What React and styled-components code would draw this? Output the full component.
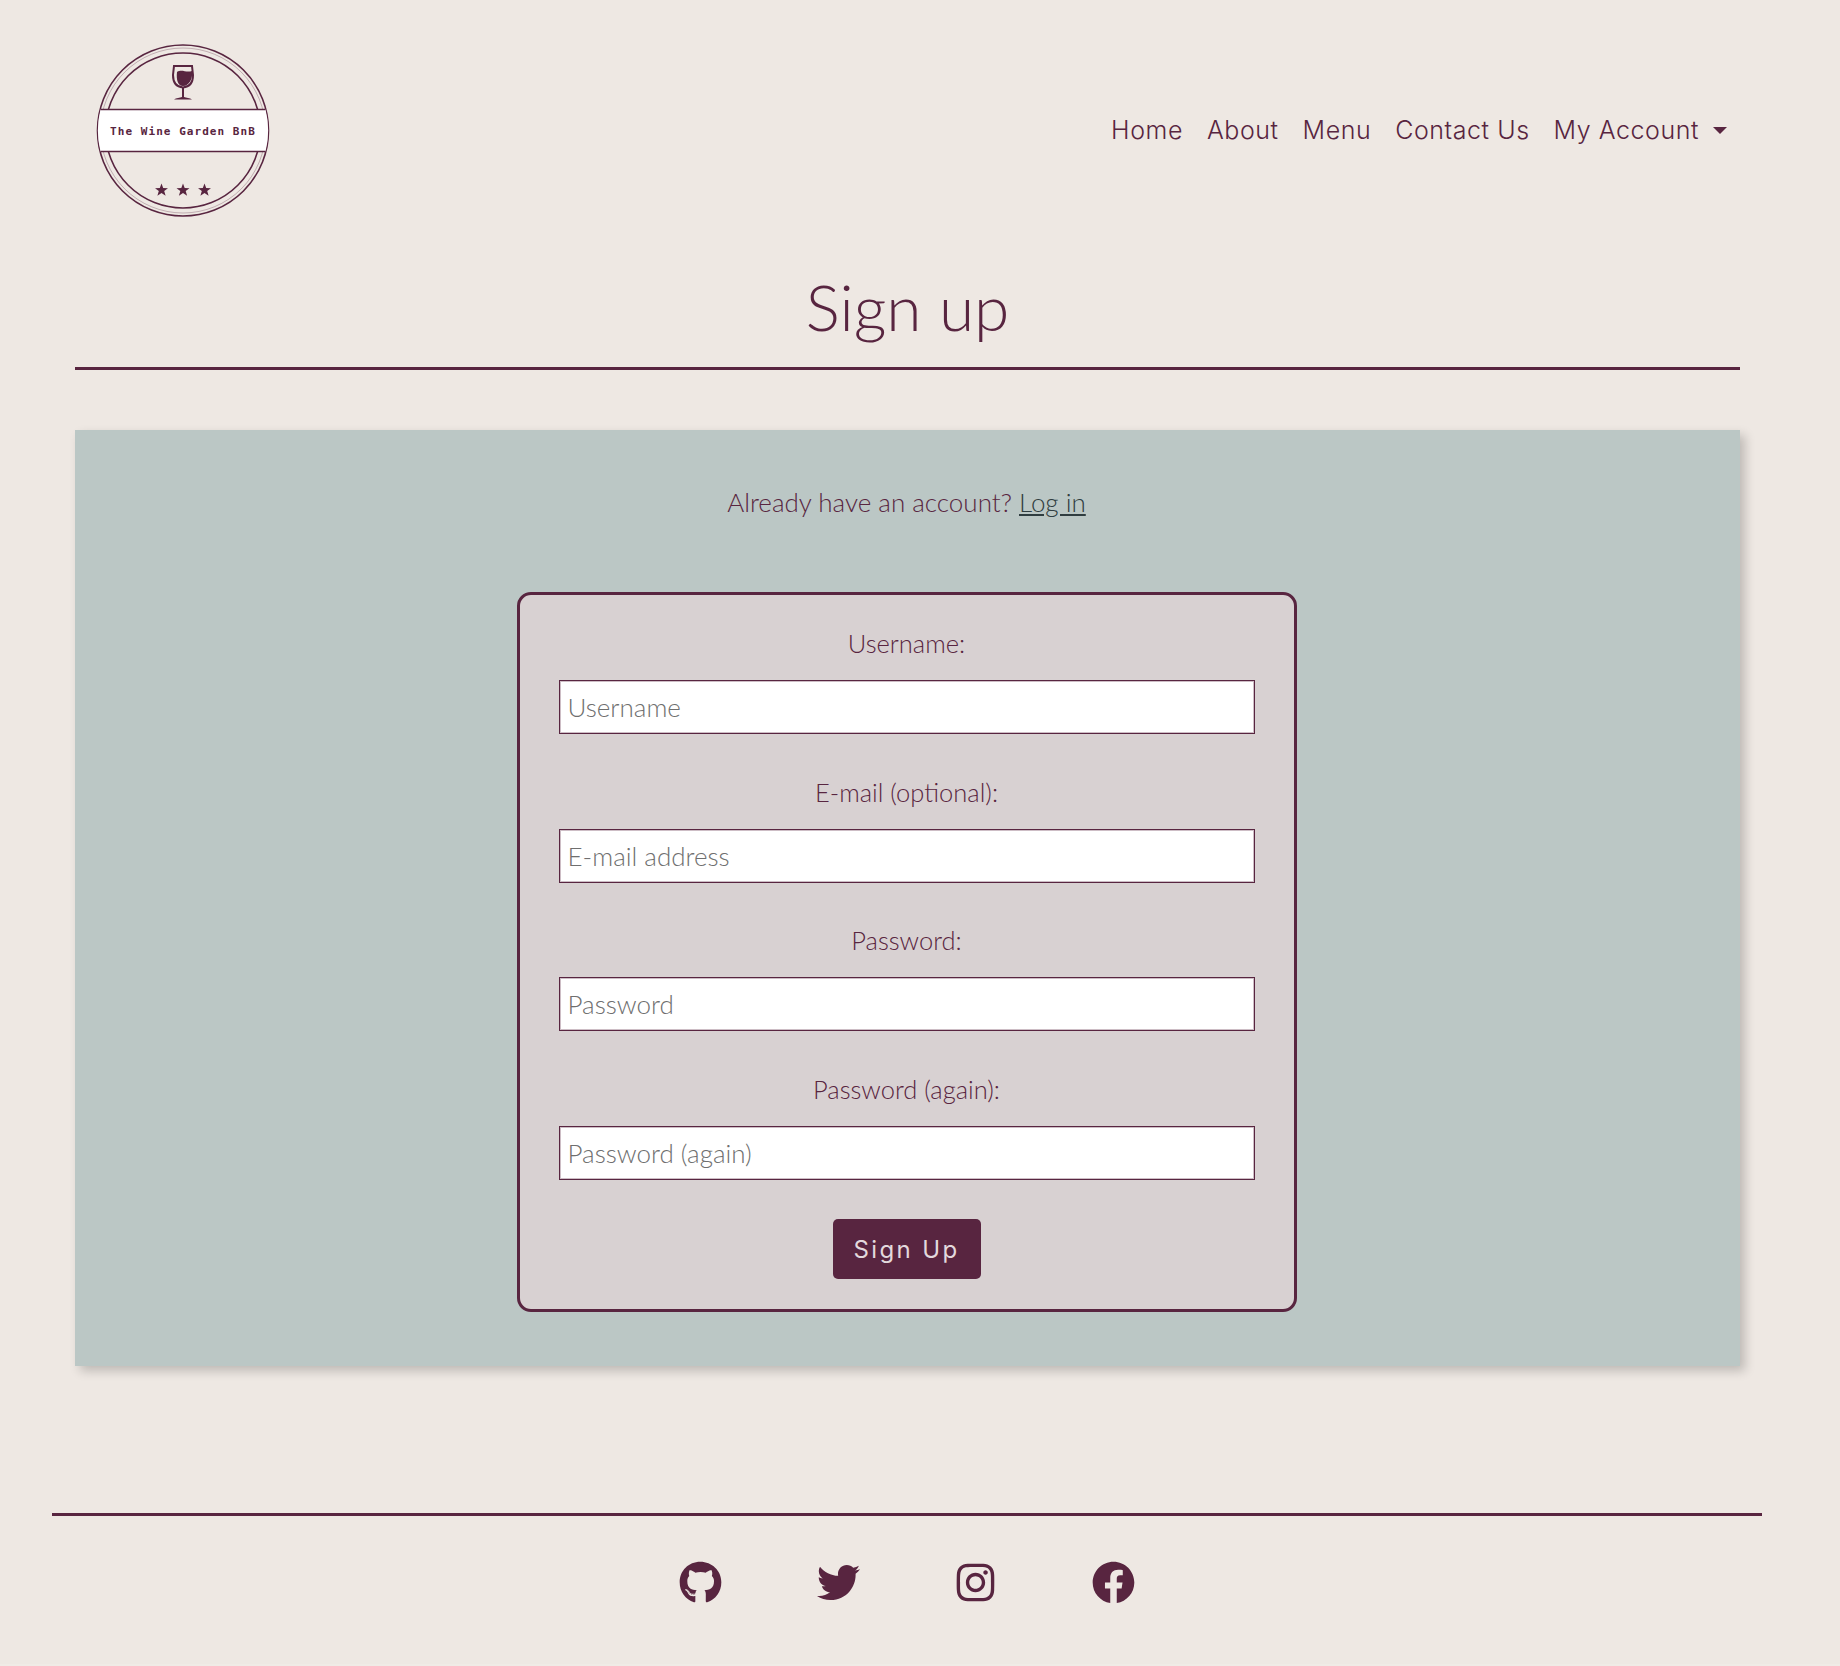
import React from 'react';
import styled, { createGlobalStyle } from 'styled-components';
import { FaGithub, FaTwitter, FaInstagram, FaFacebook } from 'react-icons/fa';

const wine = '#582540';

const GlobalStyle = createGlobalStyle`
    html, body {
        margin: 0;
        padding: 0;
        background: #f0ebe6;
    }
    body {
        font-family: Lato, "Open Sans", sans-serif;
        color: ${wine};
    }
`;

const Page = styled.div`
    height: 1664px;
    background: #eee8e3;
    display: flex;
    flex-direction: column;
`;

const Header = styled.header`
    height: 262px;
    padding: 44px 113px 0 96px;
    box-sizing: border-box;
    display: flex;
    justify-content: space-between;
    align-items: flex-start;
`;

const Nav = styled.nav`
    display: flex;
    align-items: center;
    height: 172px;
    gap: 24px;
`;

const NavLink = styled.a`
    font-family: Inter, sans-serif;
    font-size: 25px;
    font-weight: 300;
    letter-spacing: 0.55px;
    color: ${wine};
    display: flex;
    align-items: center;
    white-space: nowrap;
`;

const Caret = styled.span`
    margin-left: 14px;
    border-top: 7px solid ${wine};
    border-left: 7px solid transparent;
    border-right: 7px solid transparent;
`;

const Main = styled.main`
    padding: 0 100px 0 75px;
`;

const Title = styled.h1`
    margin: 11px 0 0;
    height: 67px;
    line-height: 67px;
    font-size: 64px;
    font-weight: 300;
    text-align: center;
`;

const Rule = styled.hr`
    margin: 27px 0 60px;
    border: 0;
    height: 3px;
    background: ${wine};
`;

const Panel = styled.section`
    height: 936px;
    padding: 55px 2px 0 0;
    box-sizing: border-box;
    background: #bbc7c5;
    box-shadow: 5px 5px 10px rgba(0, 0, 0, 0.2);
    display: flex;
    flex-direction: column;
    align-items: center;
`;

const Prompt = styled.p`
    margin: 0;
    height: 34px;
    line-height: 34px;
    font-size: 26px;
    font-weight: 300;
`;

const PromptLink = styled.a`
    color: #2f3d40;
    text-decoration: underline;
`;

const Form = styled.form`
    margin-top: 73px;
    width: 780px;
    height: 720px;
    box-sizing: border-box;
    padding: 29px 39px 0;
    background: #d8d1d2;
    border: 3px solid ${wine};
    border-radius: 14px;
    display: flex;
    flex-direction: column;
`;

const Field = styled.div`
    height: 148.5px;
    flex: none;
`;

const Label = styled.label`
    display: block;
    height: 38px;
    line-height: 38px;
    margin-bottom: 18px;
    text-align: center;
    font-size: 25.5px;
    font-weight: 300;
`;

const Input = styled.input`
    display: block;
    width: 100%;
    height: 54px;
    box-sizing: border-box;
    padding: 0 8px;
    border: 1px solid ${wine};
    border-radius: 0;
    background: #fff;
    box-shadow: inset 0 0 0 1px rgba(88, 37, 64, 0.3);
    font-family: Lato, sans-serif;
    font-size: 26px;
    font-weight: 300;
    color: ${wine};
    &::placeholder {
        color: #6f6f6f;
        opacity: 1;
    }
`;

const Submit = styled.button`
    align-self: center;
    margin-top: 1px;
    width: 148px;
    height: 60px;
    border: 0;
    border-radius: 5px;
    background: ${wine};
    color: #e3d9dd;
    font-family: Inter, sans-serif;
    font-size: 24px;
    font-weight: 400;
    letter-spacing: 2.4px;
`;

const Footer = styled.footer`
    margin: 147px 78px 0 52px;
    border-top: 3px solid ${wine};
    display: flex;
    justify-content: center;
`;

const Socials = styled.div`
    margin-top: 45px;
    display: flex;
    gap: 94.5px;
    font-size: 43px;
    line-height: 0;
    color: ${wine};
`;

const fields = [
    { label: 'Username:', placeholder: 'Username', type: 'text' },
    { label: 'E-mail (optional):', placeholder: 'E-mail address', type: 'email' },
    { label: 'Password:', placeholder: 'Password', type: 'password' },
    { label: 'Password (again):', placeholder: 'Password (again)', type: 'password' },
];

const starPath = 'l1.700 4.500 4.800 .2 -3.800 2.900 1.400 4.600 -4.100-2.700 -4.100 2.700 1.400-4.600 -3.800-2.900 4.800-.2z';

function Logo() {
    return (
        <svg width="174" height="174" viewBox="0 0 174 174">
            <circle cx="87" cy="86.500" r="85.500" fill="none" stroke={wine} strokeWidth="1.600" />
            <circle cx="87" cy="86.500" r="82.500" fill="none" stroke={wine} strokeWidth="0.500" opacity="0.600" />
            <circle cx="87" cy="86.500" r="77.500" fill="none" stroke={wine} strokeWidth="1.600" />
            <path d="M4.500 65.500 L169.500 65.500 A85 85 0 0 1 169.500 107.500 L4.500 107.500 A85 85 0 0 1 4.500 65.500 Z" fill="#fff" />
            <path d="M4.500 65.500 H169.500 M4.500 107.500 H169.500" stroke={wine} strokeWidth="1.600" />
            <text x="87" y="90.500" textAnchor="middle" fontFamily="'DejaVu Sans Mono', monospace" fontWeight="700" fontSize="11" letterSpacing="1.050" fill={wine} xmlSpace="preserve">The Wine Garden BnB</text>
            <path d="M78 22 h18 l1 9 c0 8-4 12-10 12.500 c-6-.5-10-4.500-10-12.500z" fill="none" stroke={wine} strokeWidth="2" />
            <path d="M81 28 c5-3 9 1 15-1 c1 8-3 15-9 15 c-5 0-7-6-6-14z" fill={wine} />
            <path d="M86 43 h2 v10 c2 1 6 1 8 2.500 h-18 c2-1.500 6-1.500 8-2.500z" fill={wine} />
            <path d={`M65.500 139.500 ${starPath}`} fill={wine} />
            <path d={`M87 139.500 ${starPath}`} fill={wine} />
            <path d={`M108.500 139.500 ${starPath}`} fill={wine} />
        </svg>
    );
}

export default function App() {
    return (
        <Page>
            <GlobalStyle />
            <Header>
                <Logo />
                <Nav>
                    <NavLink>Home</NavLink>
                    <NavLink>About</NavLink>
                    <NavLink>Menu</NavLink>
                    <NavLink>Contact Us</NavLink>
                    <NavLink>My Account<Caret /></NavLink>
                </Nav>
            </Header>
            <Main>
                <Title>Sign up</Title>
                <Rule />
                <Panel>
                    <Prompt>Already have an account? <PromptLink>Log in</PromptLink></Prompt>
                    <Form onSubmit={(event) => event.preventDefault()}>
                        {fields.map((field) => (
                            <Field key={field.placeholder}>
                                <Label>{field.label}</Label>
                                <Input type={field.type} placeholder={field.placeholder} />
                            </Field>
                        ))}
                        <Submit>Sign Up</Submit>
                    </Form>
                </Panel>
            </Main>
            <Footer>
                <Socials>
                    <FaGithub />
                    <FaTwitter />
                    <FaInstagram />
                    <FaFacebook />
                </Socials>
            </Footer>
        </Page>
    );
}
